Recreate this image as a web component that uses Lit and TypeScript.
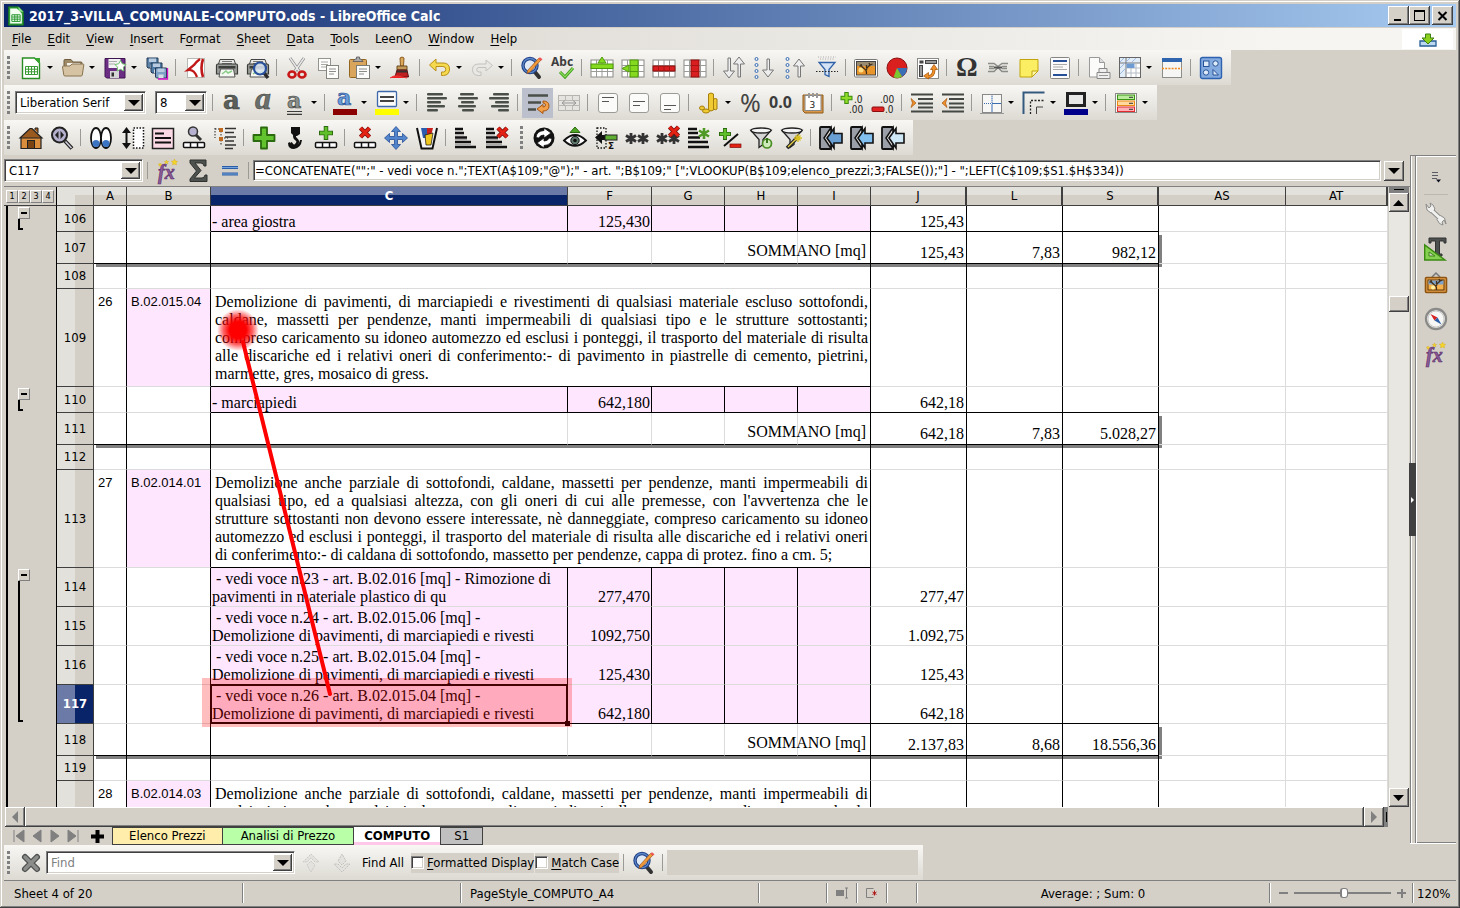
import { LitElement, html, svg, css, nothing, TemplateResult } from "lit";
import { customElement, property } from "lit/decorators.js";
import { classMap } from "lit/directives/class-map.js";

const alignLines = (widths: number[][]) =>
  widths.map(([x, w], i) => svg`<rect x=${x} y=${2 + i * 4} width=${w} height="2.4" rx="1" fill="#4a4f4a"/>`);
const gridBase = svg`<rect x="1" y="4" width="22" height="17" fill="#fff" stroke="#8a8a86"/><path d="M1 9.500h22M1 15.500h22M6.500 4v17M12 4v17M17.500 4v17" stroke="#9b9b97" fill="none"/>`;
const redX = (x: number, y: number) =>
  svg`<path d="M${x} ${y}l9 9M${x + 9} ${y}l-9 9" stroke="#7a0c0c" stroke-width="4.500"/><path d="M${x} ${y}l9 9M${x + 9} ${y}l-9 9" stroke="#e32213" stroke-width="3"/>`;
const boxes = svg`<rect x="1.500" y="16.500" width="21" height="5" rx="1" fill="#fff" stroke="#111" stroke-width="1.500"/><path d="M8.500 16v6M15.500 16v6" stroke="#111" stroke-width="1.500"/>`;
const star = (x: number, y: number) =>
  svg`<path d="M${x} ${y - 5.5}v11M${x - 5} ${y - 3}l10 6M${x + 5} ${y - 3}l-10 6" stroke="#333" stroke-width="2.800"/>`;
const stair = svg`<path d="M1 3h8M1 7h9M1 11.500h12M1 16h16M1 21h21" stroke="#111" stroke-width="2.400"/><path d="M1 5h7M1 9h9M1 13.500h12M1 18.500h16" stroke="#aaa"/>`;
const funnel = svg`<path d="M2 4.500l8 9v8l4-3v-5l8-9z" fill="#d5d5d5" stroke="#222" stroke-width="1.300"/><ellipse cx="12" cy="4.500" rx="10" ry="2.500" fill="#f4f4f4" stroke="#222" stroke-width="1.300"/>`;
const fx = svg`<text x="2" y="20" font-family="Liberation Serif,serif" font-style="italic" font-weight="bold" font-size="20" fill="#8a5c96" stroke="#5a2a68" stroke-width=".600">fx</text><path d="M18.500 0l1 2 2.200.300-1.600 1.500.400 2.200-2-1-2 1 .400-2.200-1.600-1.500 2.200-.300zM10.500 1l.700 1.500h1.500l-1.200 1 .500 1.500-1.500-.900-1.500.900.500-1.500-1.200-1h1.500zM4 4l.500 1 1.200.200-.900.800.200 1.200-1-.600-1 .600.200-1.200-.900-.800L3.500 5z" fill="#f4d42a" stroke="#d0a818" stroke-width=".400"/>`;
const magnifier = svg`<path d="M14 15l5 6" stroke="#333" stroke-width="4" stroke-linecap="round"/><circle cx="10" cy="9.500" r="7" fill="#dfe9f6" stroke="#1f3f85" stroke-width="3.400"/><circle cx="10" cy="9.500" r="7" fill="none" stroke="#5b86c8" stroke-width="1.300"/><path d="M21 4l-11 12-3 1.500.800-3.300L18.500 2.500z" fill="#f09a3a" stroke="#99521a" stroke-width=".700"/><path d="M18.300 2.600l2.700 2.200 1.500-1.600-2.500-2z" fill="#e55"/>`;
const disk = (x: number, y: number, c: string) =>
  svg`<path d="M${x} ${y}h11v10h-10l-1-1z" fill=${c} stroke="#223a58"/><rect x=${x + 2} y=${y + 0.5} width="7" height="3.500" fill="#b8cbe0"/><rect x=${x + 3} y=${y + 6.5} width="5" height="3.500" fill="#d5dde6"/>`;
const tree = svg`<path d="M12.500 18c0-3 0-4-2.500-5.500S7 9 7 8m5.500 6c0-3 2-3 3.500-5m-1-2l1 2 2.500-1M8 10l-2.500 0M12.500 12V9" fill="none" stroke="#40301c" stroke-width="1.300"/>`;
const printer = svg`<path d="M5 3.500h14l2 6H3z" fill="#e8e8e4" stroke="#444"/><path d="M7 5.500h10M7 7.500h10" stroke="#777"/><path d="M1.500 9.500q0-1.500 1.500-1.500h18q1.500 0 1.500 1.500v8.500h-21z" fill="#9b9d98" stroke="#3a3c3a" stroke-width="1.200"/><rect x="3.500" y="10" width="17" height="2.500" fill="#3c3f3c"/><path d="M5.500 13h13l1.500 8h-16z" fill="#f6f8f4" stroke="#555"/><path d="M7 18l4-3 2 2 4-2" stroke="#8c8" stroke-width="1.500" fill="none"/>`;
const outArrow = (c: string) =>
  svg`<rect x="1" y="1" width="11" height="22" rx="1" fill="#9ba0a8" stroke="#111" stroke-width="1.800"/><path d="M5 12L12 1.500V22.500z" fill="#e6e6e6" stroke="#111" stroke-width="1.500"/><path d="M8 12l7-9.500v5h8v9.500h-8v5z" fill=${c} stroke="#111" stroke-width="1.600"/>`;
const sq = (y: number) =>
  svg`<rect x="2.500" y="2.500" width="19" height="19" rx="2.500" fill="#fbfbfa" stroke="#9a9a96"/><path d="M6 ${y}h12M6 ${y + 4}h7" stroke="#555"/>`;

const ICONS: Record<string, TemplateResult<2>> = {
  app: svg`<path d="M3 1h12l6 6v16H3z" fill="#2c9a35" stroke="#1b6e24"/><path d="M15 1v6h6" fill="#8fe08a"/><path d="M5 3h8l6 6v12H5z" fill="#f4fff4"/><path d="M7 10.500h10v8H7zM7 13.200h10M7 15.800h10M10.500 10.500v8M13.500 10.500v8" stroke="#2c9a35" fill="none" stroke-width="1.200"/>`,
  doc: svg`<path d="M3.500 2h12l5 5v15.500h-17z" fill="#fff" stroke="#2a8c24" stroke-width="1.400"/><path d="M15 2h6v6z" fill="#37a52f"/><path d="M6.500 10.500h12v8h-12zM6.500 13.200h12M6.500 15.800h12M9.500 10.500v8M12.500 10.500v8M15.500 10.500v8" stroke="#3a9a34" fill="none"/>`,
  folder: svg`<path d="M3 17V4.500q0-1 1-1h6l2 2.500h8q1 0 1 1V17z" fill="#9f8a68" stroke="#6f5c3e"/><path d="M6 7h13v7H6z" fill="#f3f0ea"/><path d="M1.500 11q0-1 1-1H9l2-2h11q1 0 .800 1l-1.500 10q-.200 1-1.300 1H4q-1 0-1.200-1z" fill="#d5c3a3" stroke="#8a7550"/>`,
  save: svg`<path d="M2 2.500h20v19.500H3.500L2 20.500z" fill="#6b2d83" stroke="#3f1452"/><rect x="5.500" y="3" width="12" height="9" fill="#f2f2f2"/><path d="M6 5.500h8M6 8h6" stroke="#aaa"/><rect x="7" y="15" width="9" height="7" fill="#d6d6d6"/><rect x="8.500" y="16.500" width="2.500" height="4" fill="#333"/><path d="M17.500 4.500l1.800 3.300 3.700.700-2.600 2.700.500 3.800-3.400-1.700-3.400 1.700.500-3.800L12 8.500l3.700-.700z" fill="#fff" stroke="#6cc06c"/>`,
  saveall: svg`${disk(2, 2, "#5d83a8")}${disk(6, 7, "#4f7aa3")}${disk(10.5, 12, "#7ca0c4")}<path d="M13 23h9.500V12" stroke="#d612c8" stroke-width="1.300" fill="none"/>`,
  pdf: svg`<rect x="3.500" y="2.500" width="17" height="19" fill="#fff" stroke="#b9b9b4"/><path d="M16 3q-4 3-6 6L4 14q6-1 9 7" fill="none" stroke="#c01818" stroke-width="2.300"/><path d="M19 3q-3 9 0 18" fill="none" stroke="#c01818" stroke-width="2.600"/>`,
  print: printer,
  preview: svg`${printer}<path d="M18 17l4 5" stroke="#2c2c2c" stroke-width="3.500"/><circle cx="14" cy="12.500" r="6" fill="#dce8f6" fill-opacity=".850" stroke="#274f9c" stroke-width="2.200"/>`,
  cut: svg`<path d="M5 2l9 13M19 2l-9 13" stroke="#888" stroke-width="3"/><path d="M5 2l9 13M19 2l-9 13" stroke="#e9e9e9" stroke-width="1.500"/><ellipse cx="7" cy="18.500" rx="3.500" ry="3" fill="none" stroke="#c81818" stroke-width="2.600"/><ellipse cx="17" cy="18.500" rx="3.500" ry="3" fill="none" stroke="#c81818" stroke-width="2.600"/>`,
  copy: svg`<rect x="2.500" y="2.500" width="12" height="12" fill="#fdfdfc" stroke="#93938f"/><path d="M5 6h7M5 8.500h7M5 11h5" stroke="#a7a7a3"/><rect x="10.500" y="9.500" width="12" height="13" fill="#fdfdfc" stroke="#85857f"/><path d="M13 13h7M13 15.500h7M13 18h5" stroke="#8c8c88"/>`,
  paste: svg`<rect x="2.500" y="3.500" width="17" height="18" rx="1" fill="#d9a55c" stroke="#92661f"/><path d="M6 5.500h10l-2-2.500h-1.500V1h-3v2H8z" fill="#aaa" stroke="#555" stroke-width=".800"/><rect x="9.500" y="9.500" width="13" height="13" fill="#fbfbfa" stroke="#7b7b77"/><path d="M12 13h8M12 15.500h8M12 18h5" stroke="#8a8a86"/>`,
  brush: svg`<path d="M11 2q2-2 4 0l-.500 8h-3z" fill="#dca95c" stroke="#8c5c20"/><path d="M8 10h10v4H8z" fill="#c49a5a" stroke="#6a4a20"/><path d="M8 14h10l1.500 7H6z" fill="#c01f1f" stroke="#5a1010"/><path d="M8 14.500h10v2H8z" fill="#333"/><path d="M1 22q4-3 8-2l9 2" fill="#e22" stroke="#e33"/>`,
  undo: svg`<path d="M8 3v4h7q6.500 0 6.500 6t-6 6.500h-2V16h2q2.300 0 2.300-2.700T15 10.500H8V15L1.500 9z" fill="#f5d94e" stroke="#b8901a"/>`,
  redo: svg`<path d="M16 4v4H9q-6.500 0-6.500 5.500T8 19.500h3V16H9q-2.300 0-2.300-2.300T9 11.500h7V15l6.500-5.500z" fill="#e9e8e5" stroke="#c3c2be"/>`,
  find: magnifier,
  abc: svg`<text x="0" y="10" font-family="Noto Sans,sans-serif" font-weight="bold" font-size="12" fill="#3d3d3d">Abc</text><path d="M9 16l5 5 8-9" fill="none" stroke="#3f9e1f" stroke-width="3"/><path d="M9 16l5 5 8-9" fill="none" stroke="#8edb5a" stroke-width="1.200"/>`,
  insrow: svg`${gridBase}<rect x="1" y="8" width="22" height="4.500" fill="#85d91e" stroke="#4f9a0c"/><path d="M8 7l4-6 4 6z" fill="#85d91e" stroke="#4f9a0c"/>`,
  inscol: svg`${gridBase}<rect x="9" y="4" width="8" height="17" fill="#85d91e" stroke="#4f9a0c"/><path d="M9 9.500h8M9 15.500h8" stroke="#4f9a0c"/><path d="M8 9v7l-7-3.500z" fill="#85d91e" stroke="#4f9a0c"/>`,
  delrow: svg`${gridBase}<rect x="1" y="10" width="22" height="5" fill="#d81e1e" stroke="#8e0e0e"/><path d="M6.500 10v5M12 10v5M17.500 10v5" stroke="#a81414"/>`,
  delcol: svg`${gridBase}<rect x="8" y="4" width="8" height="17" fill="#d81e1e" stroke="#8e0e0e"/><path d="M8 9.500h8M8 15.500h8" stroke="#a81414"/>`,
  sort: svg`<path d="M6 2v13H1.500L7 22l5.500-7H8.500V2zM16 21V8h-4.500L17 1l5.500 7H18.500v13z" fill="#eee" stroke="#777"/>`,
  sortdesc: svg`<g fill="#eaf1fa" stroke="#3a6cb0"><circle cx="3.500" cy="3" r="1.500"/><circle cx="3.500" cy="9" r="1.500"/><circle cx="3.500" cy="15" r="1.500"/><circle cx="3.500" cy="21" r="1.500"/></g><path d="M14 3v11H9.500l5.500 7 5.500-7H16.500V3z" fill="#eee" stroke="#777"/>`,
  sortasc: svg`<g fill="#eaf1fa" stroke="#3a6cb0"><circle cx="3.500" cy="3" r="1.500"/><circle cx="3.500" cy="9" r="1.500"/><circle cx="3.500" cy="15" r="1.500"/><circle cx="3.500" cy="21" r="1.500"/></g><path d="M14 21V10H9.500L15 3l5.500 7H16.500v11z" fill="#eee" stroke="#777"/>`,
  filter: svg`<path d="M3 1h18M5 3h14" stroke="#aaa" stroke-dasharray="1 1.500"/><path d="M4 6.500h16l-6 7v7l-4-2v-5z" fill="#d4e3f5" stroke="#2f62a8" stroke-width="1.300"/><path d="M1 15.500h22" stroke="#222" stroke-dasharray="1.500 1.500"/>`,
  image: svg`<rect x=".500" y="3.500" width="23" height="17.500" rx="1" fill="#fff" stroke="#777"/><rect x="2.500" y="5.500" width="19" height="13.500" fill="#e8962c" stroke="#444"/><path d="M3 6h18v4H3z" fill="#9a8a70"/><circle cx="7" cy="14" r="2.500" fill="#ffe08a"/>${tree}`,
  chart: svg`<circle cx="12" cy="12" r="10" fill="#da1f1f" stroke="#8c0f0f"/><path d="M12 12h10a10 10 0 0 1-5 8.700z" fill="#3a6fb5"/><path d="M12 12l5 8.700a10 10 0 0 1-8.500.500z" fill="#7cc832"/>`,
  pivot: svg`<rect x="1.500" y="2.500" width="21" height="20" fill="#fff" stroke="#8a8a86"/><rect x="3.500" y="4.500" width="4" height="3" fill="#444"/><rect x="9.500" y="4.500" width="11" height="3" fill="#999" stroke="#444"/><rect x="3.500" y="9.500" width="3" height="11" fill="#999" stroke="#444"/><path d="M11 20.500q7 1 7-8" fill="none" stroke="#a85a10" stroke-width="3.200"/><path d="M14.500 13.500l3.500-5 3.500 5zM12.500 16.500l-5 3.500 5 3z" fill="#f0902a" stroke="#a85a10" stroke-width=".800"/><path d="M11 20.500q7 1 7-8" fill="none" stroke="#f0902a" stroke-width="1.800"/>`,
  omega: svg`<text x="1" y="20" font-family="Liberation Serif,serif" font-weight="bold" font-size="27" fill="#333">Ω</text>`,
  link: svg`<g fill="none" stroke="#8a8c88" stroke-width="1.500"><path d="M2 7.500h6l4 3M2 15.500h6l4-4M22 7.500h-6l-4 3M22 15.500h-6l-4-4M3 10.500h5M16 10.500h5M3 12.500h5M16 12.500h5"/></g><path d="M8 11.500h8" stroke="#555" stroke-width="2"/>`,
  note: svg`<path d="M3 3.500h18V15l-6 6H3z" fill="#fbee62" stroke="#c2a50c"/><path d="M15 21v-6h6z" fill="#fff7a8" stroke="#c2a50c"/>`,
  header: svg`<rect x="2.500" y="1.500" width="19" height="21" rx="1" fill="#fafafa" stroke="#858581"/><path d="M5 5h14M5 19h14" stroke="#254f96" stroke-width="2"/><path d="M5 8.500h14M5 11h10M5 13.500h14" stroke="#a9a9a5"/>`,
  printarea: svg`<path d="M2.500 1.500h10l5 5V21h-15z" fill="#fbfbfa" stroke="#999"/><path d="M12.500 1.500v5h5" fill="#ddd" stroke="#999"/><path d="M12 12.500h8v4h-8zM10 16.500h13v6H10z" fill="#eee" stroke="#888"/><path d="M12 19.500h9" stroke="#999"/>`,
  freeze: svg`<rect x="1.500" y="1.500" width="21" height="20" fill="#fff" stroke="#666"/><path d="M2 2h20v5H8v14H2z" fill="#e3edf8"/><path d="M2 7h20M8 2v19" stroke="#777"/><path d="M8 12h14M8 17h14M13 7v14M18 7v14" stroke="#b5bcc6"/><path d="M2 6l4-4M8 6l4-4M14 6l4-4M2 12l5-5M2 18l5-5" stroke="#9dbbe0"/><rect x="8.500" y="7.500" width="8" height="4.500" fill="#6d9bd2"/>`,
  split: svg`<rect x="2.500" y="2.500" width="19" height="19" fill="#f6f6f4" stroke="#8d8d89"/><rect x="2" y="2" width="20" height="4" fill="#2f64ae"/><path d="M2 12.500h20" stroke="#f08a1c" stroke-width="1.500" stroke-dasharray="2 1.200"/>`,
  shapes: svg`<rect x="1.500" y="1.500" width="21" height="21" rx="2" fill="#84abdf" stroke="#2f62ae" stroke-width="1.400"/><g fill="#dfeaf8" stroke="#255196"><rect x="4.500" y="5" width="5.500" height="5.500"/><circle cx="16.500" cy="7.500" r="2.700"/><circle cx="7" cy="16.500" r="2.700"/><path d="M14 13.500v5.500h5.500z"/></g>`,
  bold: svg`<text x="2" y="18" font-family="DejaVu Serif,serif" font-weight="bold" font-size="26" fill="#5b5f5b" stroke="#3a3d3a" stroke-width=".600">a</text>`,
  italic: svg`<text x="3" y="18" font-family="Liberation Serif,serif" font-style="italic" font-weight="bold" font-size="32" fill="#6b6f6b" stroke="#3a3d3a" stroke-width=".500">a</text>`,
  under: svg`<text x="4" y="17" font-family="DejaVu Serif,serif" font-weight="bold" font-size="22" fill="#8b8f8b" stroke="#3a3d3a" stroke-width=".600">a</text><path d="M4 20.500h15M4 23.300h15" stroke="#3a3d3a" stroke-width="1.200"/>`,
  fontcolor: svg`<text x="4" y="14" font-family="DejaVu Serif,serif" font-weight="bold" font-size="22" fill="#6a9ad8" stroke="#264f96" stroke-width=".700">a</text><rect x="0" y="18" width="24" height="6" fill="#8b0000"/>`,
  highlight: svg`<rect x="2.500" y=".500" width="19" height="15" rx="1" fill="#fbfbfa" stroke="#3d69aa" stroke-width="1.300"/><path d="M5 6h14M5 10h14" stroke="#444" stroke-width="2"/><rect x="0" y="18" width="24" height="6" fill="#ff0"/>`,
  left: svg`${alignLines([[2, 16], [2, 20], [2, 14], [2, 18], [2, 11]])}`,
  center: svg`${alignLines([[4, 14], [2, 20], [5, 13], [2, 18], [6, 12]])}`,
  right: svg`${alignLines([[6, 16], [2, 20], [8, 14], [4, 18], [11, 11]])}`,
  wrap: svg`<path d="M2 4.500h20M2 11.500h13M2 18.500h8" stroke="#4a4f4a" stroke-width="2.400"/><path d="M17 10q6 0 6 5t-6 5v2.500l-6-4.500 6-4.500v2.500q2.500 0 2.500-2T17 12z" fill="#f3a04a" stroke="#a8560e"/>`,
  merge: svg`<rect x="1.500" y="4.500" width="21" height="15" fill="#e6e4e0" stroke="#b5b3ae"/><path d="M1 9.500h22M1 14.500h22M8.500 4v5M15.500 4v5M8.500 15v5M15.500 15v5" stroke="#bbb9b4"/><path d="M5 12h14M8 9.500L5 12l3 2.500M16 9.500l3 2.500-3 2.500" stroke="#999" fill="none"/>`,
  vtop: sq(6.5), vmid: sq(10.5), vbot: sq(14.5),
  money: svg`<g fill="#f0ca32" stroke="#a67f0c"><path d="M11.500 3q2.500-2 5 0v16q-2.500 2-5 0z"/><path d="M16.500 8q2-1 3.500 0v10q-1.500 1.500-3.500 0z"/><ellipse cx="5" cy="17" rx="2.500" ry="2"/><ellipse cx="9" cy="20" rx="3.500" ry="2"/></g>`,
  percent: svg`<text x="1" y="21" font-family="Noto Sans,sans-serif" font-size="25" fill="#444">%</text>`,
  number: svg`<text x="-1" y="17" font-family="Noto Sans,sans-serif" font-weight="bold" font-size="16" fill="#3b3b3b">0.0</text>`,
  date: svg`<path d="M2 4h20v18H4l-2-2z" fill="#d9974a" stroke="#8e5a18"/><rect x="4" y="4.500" width="16" height="15" fill="#fff" stroke="#888"/><path d="M8 2v5M16 2v5M12 2v4" stroke="#999" stroke-width="2"/><text x="8.500" y="17" font-family="DejaVu Sans,sans-serif" font-size="9" fill="#222">3</text>`,
  adddec: svg`<path d="M6.500 1v12M.500 7h12" stroke="#3d8a0f" stroke-width="4.500"/><path d="M6.500 2v10M1.500 7h10" stroke="#8edb2a" stroke-width="2.500"/><g font-family="DejaVu Sans Condensed,sans-serif" font-size="10" fill="#222"><text x="14" y="12">.0</text><text x="9" y="22">.00</text></g>`,
  deldec: svg`<rect x="1" y="16" width="12" height="4.500" rx="1" fill="#e02222" stroke="#8a0e0e"/><g font-family="DejaVu Sans Condensed,sans-serif" font-size="10" fill="#222"><text x="9" y="12">.00</text><text x="14" y="22">.0</text></g>`,
  indent: svg`<path d="M1 3.500h22M8 8h15M8 12.500h15M8 16.500h15M1 20.500h22" stroke="#444844" stroke-width="2.200"/><path d="M1 7.500l5 4.500-5 4.500 1.500-4.500z" fill="#f0902a" stroke="#a8560e" stroke-width=".700"/>`,
  outdent: svg`<path d="M1 3.500h22M8 8h15M8 12.500h15M8 16.500h15M1 20.500h22" stroke="#444844" stroke-width="2.200"/><path d="M6 7.500L1 12l5 4.500-1.500-4.500z" fill="#f0902a" stroke="#a8560e" stroke-width=".700"/>`,
  border: svg`<rect x="2.500" y="3.500" width="19" height="18" fill="#f7f7f6" stroke="#888"/><path d="M12 4v17M3 12.500h18" stroke="#3a6cb0"/><path d="M12 4v8M3 12.500h9" stroke="#f7f7f6" stroke-dasharray="1 1"/><path d="M0 22.500h24" stroke="#999"/>`,
  bstyle: svg`<path d="M1.500 23V1.500h21" fill="none" stroke="#34597e" stroke-width="2"/><path d="M8.500 23V9.500H23" fill="none" stroke="#222" stroke-width="1.300" stroke-dasharray="2 1.500"/><path d="M14.500 23v-7H21" fill="none" stroke="#444"/>`,
  bcolor: svg`<rect x="3.500" y="2.500" width="17" height="12" fill="#e8e8e6" stroke="#222" stroke-width="3"/><rect x="0" y="18" width="24" height="6" fill="#00008b"/>`,
  cond: svg`<rect x="1.500" y="2.500" width="21" height="19" fill="#f7f7f6" stroke="#8a8a86"/><rect x="3.500" y="4" width="17" height="4.500" fill="#b9eb9a" stroke="#3c9616"/><rect x="3.500" y="10" width="17" height="4.500" fill="#ffd9a0" stroke="#e88a14"/><rect x="3.500" y="16" width="17" height="4.500" fill="#ffb0b4" stroke="#e02a30"/><path d="M15 6.300h4M15 12.300h4M15 18.300h4" stroke="#333"/>`,
  home: svg`<path d="M2 11.500v11h20v-11" fill="#d98e3e" stroke="#222" stroke-width="1.200"/><path d="M16 4V2h3v5" fill="#a65c18" stroke="#222"/><path d="M1 12L11 2.500h2L23 12z" fill="#9a5a1e" stroke="#222" stroke-width="1.200"/><rect x="8.500" y="14.500" width="7" height="8" fill="#7a4312" stroke="#222"/>`,
  zoom: svg`<path d="M15 15l7 7.500" stroke="#222" stroke-width="4"/><path d="M15.500 15.500l6 6.500" stroke="#d2cfe0" stroke-width="1.500"/><circle cx="9.500" cy="9" r="7.500" fill="#b6b1cf" stroke="#222" stroke-width="2"/><path d="M8.500 5v8L5 9zM10.500 5v8L14 9z" fill="#222"/>`,
  eyes: svg`<ellipse cx="7" cy="12" rx="5" ry="10" fill="#fff" stroke="#111" stroke-width="1.800"/><ellipse cx="17" cy="12" rx="5" ry="10" fill="#fff" stroke="#111" stroke-width="1.800"/><circle cx="7" cy="17.500" r="3.600" fill="#3c74c4"/><circle cx="17" cy="17.500" r="3.600" fill="#3c74c4"/>`,
  height: svg`<path d="M6.500 4v16" stroke="#111" stroke-width="2"/><path d="M2 7l4.500-6L11 7zM2 17l4.500 6 4.500-6z" fill="#111"/><rect x="13.500" y="2" width="10" height="20" fill="#fff" stroke="#111" stroke-width="1.500" stroke-dasharray="1.500 1.500"/>`,
  textbox: svg`<rect x="1.500" y="2.500" width="21" height="20" fill="#fbd9e4" stroke="#222" stroke-width="1.500"/><path d="M4 7.500h9M4 12h16M4 16.500h16" stroke="#111" stroke-width="2"/>`,
  zoomrow: svg`<path d="M14 9l5 5" stroke="#333" stroke-width="3"/><circle cx="11" cy="5.500" r="4.500" fill="#b6b1cf" stroke="#333" stroke-width="1.500"/>${boxes}`,
  tree: svg`<path d="M2 2v10M2 3h7M8 5v15M8 12h7" stroke="#222" stroke-dasharray="1.500 1.500"/><rect x="6" y="2" width="4" height="4" fill="#c06a20"/><rect x="6" y="11" width="4" height="4" fill="#c06a20"/><path d="M12 2.500h11M12 6.500h9M12 11h11M12 15h9M12 19h11M12 22.500h8" stroke="#333" stroke-width="1.700"/>`,
  plus: svg`<path d="M9 1.500h6V9h7.500v6H15v7.500H9V15H1.500V9H9z" fill="#63c32e" stroke="#2c6a10" stroke-width="1.800" stroke-linejoin="round"/>`,
  hook: svg`<path d="M8 1h9v7l-3 2h-3L8 7z" fill="#111"/><path d="M11.500 9q-.500 3 2 4.500 2.500 2 0 5t-5-.500l-1-1" fill="none" stroke="#111" stroke-width="2.800"/><path d="M5 17q0 6 6 6 7-1 8-9h-2q-1 5-5 6-4 .500-5-4z" fill="#111"/>`,
  plusrow: svg`<path d="M12 0v14M5 7h14" stroke="#2c6a10" stroke-width="4.500"/><path d="M12 1v12M6 7h12" stroke="#5fc02a" stroke-width="2.800"/>${boxes}`,
  delrow2: svg`${redX(7.5, 2)}${boxes}`,
  move: svg`<path d="M12 .500l4.500 5h-3v5h5v-3l5 4.500-5 4.500v-3h-5v5h3l-4.500 5-4.500-5h3v-5h-5v3l-5-4.500 5-4.500v3h5v-5h-3z" fill="#5285cc" stroke="#264f96" stroke-width=".800"/>`,
  bin: svg`<path d="M2 2l4.500 20.500h11L22 2" fill="#f5f5f5" stroke="#111" stroke-width="2"/><path d="M6 2h7v10H8z" fill="#2c5cae"/><path d="M12 2h6l-2 8h-4z" fill="#c8201c"/><path d="M10 9l8-2-2 12h-5z" fill="#f0c820" stroke="#111" stroke-width=".700"/>`,
  stair, stairdel: svg`${stair}${redX(13, 2)}`,
  cycle: svg`<circle cx="12" cy="12" r="10.500" fill="#111"/><path d="M4 11.500q.500-6.500 8-7V2l7 5-7 5V9q-4 0-5 3zM20 12.500q-.500 6.500-8 7V22l-7-5 7-5v3q4 0 5-3z" fill="#fff" stroke="#111" stroke-width=".800"/>`,
  eye: svg`<path d="M7 6.500L12 1l5 5.500z" fill="#4fa524" stroke="#2c6a10"/><path d="M1 14.500q11-11 22 0-11 10.500-22 0z" fill="#fff" stroke="#111" stroke-width="1.800"/><circle cx="12" cy="14.500" r="4.200" fill="#5d7a6d" stroke="#111"/><circle cx="12" cy="14.500" r="1.800" fill="#111"/>`,
  sumleft: svg`<path d="M3 2h9v20H3z" fill="none" stroke="#111" stroke-width="1.300" stroke-dasharray="1.500 1.500"/><path d="M1 11.500L8 5v4h3v5H8v4z" fill="#111"/><rect x="11" y="9" width="12" height="5" fill="#5fae34" stroke="#222"/><text x="14" y="23" font-family="DejaVu Sans,sans-serif" font-weight="bold" font-size="9" fill="#111">Σ</text>`,
  stars: svg`${star(6, 12.500)}${star(18, 12.500)}`,
  starsdel: svg`${star(6, 12.500)}${star(18, 12.500)}${redX(13.5, 1)}`,
  stairstar: svg`<path d="M1 3h9M1 7h10M1 11.500h12M1 16h20M1 21h21" stroke="#111" stroke-width="2.400"/><path d="M17 2v11M12 4.500l10 6M22 4.500l-10 6" stroke="#4f9a24" stroke-width="2.600"/>`,
  plusminus: svg`<path d="M7 2v12M1 8h12" stroke="#2c6a10" stroke-width="4"/><path d="M7 3v10M2 8h10" stroke="#5fc02a" stroke-width="2.500"/><path d="M6 20L20 8" stroke="#111" stroke-width="2"/><rect x="12" y="18" width="11" height="3.500" fill="#e32213" stroke="#7a0c0c" stroke-width=".700"/>`,
  filteron: svg`${funnel}<circle cx="18" cy="17.500" r="4.500" fill="#cdebb8" stroke="#4a8c24" stroke-width="1.700"/><path d="M18 12v5" stroke="#2c6a10" stroke-width="1.800"/>`,
  filtermagic: svg`${funnel}<path d="M7 22L17 12" stroke="#222" stroke-width="3.500"/><path d="M8 21l8-8" stroke="#e6d34a" stroke-width="1.200"/><path d="M18 8v8M14 12h8M15.500 9.500l5 5M20.500 9.500l-5 5" stroke="#d8c020" stroke-width="1.300"/>`,
  out1: outArrow("#6a9fd4"), out2: outArrow("#82c0f0"), out3: outArrow("#cfe8f6"),
  fx,
  sigma: svg`<path d="M3 1h16v6h-2q-.500-3-3-3H8l6 7.500L7.500 19H15q2.500 0 3-3h2V22.500H3V20l6.500-8L3 4z" fill="#4d524f" stroke="#2e312f"/>`,
  equals: svg`<path d="M4 8.500h16M4 15h16" stroke="#2c5ea8" stroke-width="3.200"/><path d="M4 8.500h16M4 15h16" stroke="#79a3dc" stroke-width="1.200"/>`,
  download: svg`<path d="M4 12h16v5H4z" fill="#bcd8f0" stroke="#275e94" stroke-width="1.300"/><path d="M9.500 5h5v4H18l-6 6-6-6h3.500z" fill="#8ad01c" stroke="#3d8010"/>`,
  menu: svg`<path d="M8 8.500h6M8 11.500h6M8 14.500h5" stroke="#5c5c66"/><path d="M12 15.500h5l-2.500 3z" fill="#112"/>`,
  wrench: svg`<path d="M5 6l14 13" stroke="#8c8c8a" stroke-width="5"/><path d="M2 2l1 6 4 3 4-4-2-4-3-2 1 3-2 2zM22 22l-1.500-6-4-2.500-3.500 4 2.500 4 3.500 1.500-1-3 2-2z" fill="#f1f1ef" stroke="#8c8c8a" stroke-linejoin="round"/><path d="M6 7l12 11" stroke="#f1f1ef" stroke-width="3"/>`,
  styles: svg`<path d="M5 1h17v5h-2V4h-4.500v13H18v2h-9v-2h2.500V4H7v2H5z" fill="#4c504e" stroke="#333"/><path d="M.700 8v15H21z" fill="#86d052" stroke="#3a8a12" stroke-width="1.400"/><path d="M5 15v4h6z" fill="#d4cfc8" stroke="#3a8a12"/>`,
  gallery: svg`<path d="M8 5l4-4 4 4" fill="none" stroke="#777" stroke-width="1.500"/><rect x="1.500" y="5.500" width="21" height="15" rx="1" fill="#e3a04a" stroke="#8e5410" stroke-width="1.600"/><rect x="4" y="8" width="16" height="10" fill="#f7b24c" stroke="#5c3408"/><path d="M4.500 8.500h15v4h-15z" fill="#7da2cc"/><circle cx="9" cy="15.500" r="2" fill="#fff0a0"/>${tree}`,
  compass: svg`<circle cx="12" cy="12" r="10" fill="#f6f6f5" stroke="#8a8a88" stroke-width="2.300"/><circle cx="12" cy="12" r="8" fill="none" stroke="#c9c9c7"/><path d="M6.500 7l7 3.500-3 3z" fill="#d92020"/><path d="M17.500 17.500l-7-4 3-3z" fill="#2c5ea8"/>`,
  close: svg`<path d="M6 6l12 12M18 6L6 18" stroke="#4d504e" stroke-width="6" stroke-linecap="round"/><path d="M6 6l12 12M18 6L6 18" stroke="#8a8d8a" stroke-width="3.500" stroke-linecap="round"/>`,
  prev: svg`<path d="M12 3l8 8h-4l-4-4-4 4H4zM12 10l4 4-4 7-4-7z" fill="#e4e2de" stroke="#cbc9c4" stroke-dasharray="2 1"/>`,
  next: svg`<path d="M12 21l-8-8h4l4 4 4-4h4zM12 14l-4-4 4-7 4 7z" fill="#e4e2de" stroke="#c2c0bb" stroke-dasharray="2 1"/>`,
};

const icon = (name: string) => html`<svg class="icon" viewBox="0 0 24 24" aria-hidden="true">${ICONS[name]}</svg>`;

type Row =
  | { n: number; kind: "measure"; text: string[]; f: string; j: string; last?: boolean; group?: number }
  | { n: number; kind: "total"; j: string; l: string; s: string }
  | { n: number; kind: "gap" }
  | { n: number; kind: "item"; no: string; code: string; lines: string[]; cut?: boolean };

const ROWS: Row[] = [
  { n: 106, kind: "measure", text: ["- area giostra"], f: "125,430", j: "125,43", last: true, group: 1 },
  { n: 107, kind: "total", j: "125,43", l: "7,83", s: "982,12" },
  { n: 108, kind: "gap" },
  {
    n: 109, kind: "item", no: "26", code: "B.02.015.04",
    lines: [
      "Demolizione di pavimenti, di marciapiedi e rivestimenti di qualsiasi materiale escluso sottofondi,",
      "caldane, massetti per pendenze, manti impermeabili di qualsiasi tipo e le strutture sottostanti;",
      "compreso caricamento su idoneo automezzo ed esclusi i ponteggi, il trasporto del materiale di risulta",
      "alle discariche ed i relativi oneri di conferimento:- di pavimento in piastrelle di cemento, pietrini,",
      "marmette, gres, mosaico di gress.",
    ],
  },
  { n: 110, kind: "measure", text: ["- marciapiedi"], f: "642,180", j: "642,18", last: true, group: 1 },
  { n: 111, kind: "total", j: "642,18", l: "7,83", s: "5.028,27" },
  { n: 112, kind: "gap" },
  {
    n: 113, kind: "item", no: "27", code: "B.02.014.01",
    lines: [
      "Demolizione anche parziale di sottofondi, caldane, massetti per pendenze, manti impermeabili di",
      "qualsiasi tipo, ed a qualsiasi altezza, con gli oneri di cui alle premesse, con l'avvertenza che le",
      "strutture sottostanti non devono essere interessate, nè danneggiate, compreso caricamento su idoneo",
      "automezzo ed esclusi i ponteggi, il trasporto del materiale di risulta alle discariche ed i relativi oneri",
      "di conferimento:- di caldana di sottofondo, massetto per pendenze, cappa di protez. fino a cm. 5;",
    ],
  },
  { n: 114, kind: "measure", text: ["\u00a0- vedi voce n.23 - art. B.02.016 [mq] - Rimozione di", "pavimenti in materiale plastico di qu"], f: "277,470", j: "277,47", group: 4 },
  { n: 115, kind: "measure", text: ["\u00a0- vedi voce n.24 - art. B.02.015.06 [mq] -", "Demolizione di pavimenti, di marciapiedi e rivesti"], f: "1092,750", j: "1.092,75", group: 0 },
  { n: 116, kind: "measure", text: ["\u00a0- vedi voce n.25 - art. B.02.015.04 [mq] -", "Demolizione di pavimenti, di marciapiedi e rivesti"], f: "125,430", j: "125,43", group: 0 },
  { n: 117, kind: "measure", text: ["\u00a0- vedi voce n.26 - art. B.02.015.04 [mq] -", "Demolizione di pavimenti, di marciapiedi e rivesti"], f: "642,180", j: "642,18", last: true, group: 0 },
  { n: 118, kind: "total", j: "2.137,83", l: "8,68", s: "18.556,36" },
  { n: 119, kind: "gap" },
  {
    n: 120, kind: "item", no: "28", code: "B.02.014.03", cut: true,
    lines: [
      "Demolizione anche parziale di sottofondi, caldane, massetti per pendenze, manti impermeabili di",
      "qualsiasi tipo, ed a qualsiasi altezza, con gli oneri di cui alle premesse, con l'avvertenza che le",
    ],
  },
];

const ACTIVE_ROW = 117;

@customElement("calc-sheet")
export class CalcSheet extends LitElement {
  static styles = css`
    :host { display: block; position: relative; overflow: hidden; background: #fff; }
    table { width: 100%; table-layout: fixed; border-collapse: separate; border-spacing: 0; font: 16px/18px "Liberation Serif", serif; }
    .w-gutter { width: 53px; } .w-head { width: 37px; } .w-a { width: 33px; } .w-b, .w-f { width: 84px; }
    .w-c { width: 357px; } .w-g { width: 73px; } .w-j { width: 96px; } .w-as { width: 127px; }
    th, td { box-sizing: border-box; padding: 0; }
    td { border: 0 solid #dcdcdc; border-width: 0 1px 1px 0; vertical-align: bottom; white-space: nowrap; }
    thead th {
      height: 19px; font: 13px/16px "DejaVu Sans Condensed", "Noto Sans", sans-serif;
      background: linear-gradient(#e2e1dc 8px, #d4cfc6 8px); border: 0 solid #404040; border-width: 0 1px 1px 0;
    }
    thead th.wide { border-right-width: 2px; }
    thead th.sel { background: linear-gradient(#6b7aa6 8px, #0a246a 8px); color: #fff; font-weight: bold; }
    thead th.corner { background: linear-gradient(#e2e1dc 8px, transparent 8px), linear-gradient(90deg, #e2e1dc 18px, #d4cfc6 18px); }
    thead th.levels { background: #d4d0c8; border-right-color: #000; }
    .levelbar { display: flex; padding-left: 2px; }
    .level {
      width: 12px; height: 13px; padding: 0; border: 1px solid; border-color: #fff #808080 #808080 #fff;
      background: #d4d0c8; font: 9px/10px "DejaVu Sans Condensed", sans-serif;
    }
    tbody th {
      font: 13px/16px "DejaVu Sans Condensed", "Noto Sans", sans-serif; border: 0 solid #404040; border-width: 0 1px 1px 0;
      background: linear-gradient(90deg, #e2e1dc 18px, #d4cfc6 18px);
    }
    tbody th.sel { background: linear-gradient(90deg, #6b7aa6 18px, #0a246a 18px); color: #fff; font-weight: bold; }
    td.gutter {
      border-width: 0 1px 0 0; border-color: #000; vertical-align: top;
      background: linear-gradient(#000, #000) 2px 0 / 2px 100% no-repeat, #d4d0c8;
    }
    td.group {
      background:
        linear-gradient(#000, #000) 2px 0 / 2px 100% no-repeat,
        linear-gradient(#000, #000) 14px 12px / 2px calc(100% - 14px) no-repeat,
        linear-gradient(#000, #000) 14px calc(100% - 2px) / 5px 2px no-repeat, #d4d0c8;
    }
    .fold {
      display: block; width: 12px; height: 12px; margin: 1px 0 0 14px; padding: 0; border: 1px solid; border-color: #fff #808080 #808080 #fff;
      background: linear-gradient(#000, #000) center / 6px 2px no-repeat, #d4d0c8;
    }
    .measure1 { height: 26px; } .measure2 { height: 39px; } .total { height: 32px; } .gap { height: 25px; } .item { height: 98px; }
    .kr { border-right-color: #000; }
    .kb { border-bottom-color: #000; }
    .pink { background: #ffe6ff; }
    .line { display: block; }
    .txt { padding-left: 1px; }
    .num { text-align: right; padding-right: 1px; }
    .tail { padding-right: 2px; }
    .total .num { padding-bottom: 1px; }
    .sum { padding: 0 4px 3px 0; }
    .sum .line { display: flex; justify-content: flex-end; }
    .narrow { font-family: "Liberation Sans Narrow", "Liberation Sans", sans-serif; font-size: 13px; vertical-align: top; padding: 4px 0 0 4px; }
    .desc { vertical-align: top; padding: 4px 2px 0 4px; white-space: normal; }
    .desc .just { text-align-last: justify; }
    .gap .shade { background: linear-gradient(#808080, #808080) 0 0 / 100% 3px no-repeat; }
    .gap .shade-a { background: linear-gradient(#808080, #808080) 2px 0 / 100% 3px no-repeat; }
    .gap .shade-end { background: linear-gradient(#808080, #808080) 0 0 / 3px 3px no-repeat; }
    .total .shade-right { background: linear-gradient(#808080, #808080) 0 3px / 3px 100% no-repeat; }
    .active { position: relative; }
    .cursor { position: absolute; inset: -1px; border: 2px solid #000; }
    .cursor::after { content: ""; position: absolute; right: -4px; bottom: -4px; width: 5px; height: 5px; background: #000; }
    .mark { position: absolute; inset: -7px -5px -4px -9px; background: rgba(255, 0, 0, 0.26); z-index: 1; }
    .pointer { position: absolute; left: 206px; top: 113px; width: 130px; height: 400px; z-index: 2; pointer-events: none; }
  `;

  private gutter(row: Row) {
    if (row.kind !== "measure") return html`<td class="gutter"></td>`;
    if (!row.group) return nothing;
    return html`<td class="gutter group" rowspan=${row.group}><button class="fold" aria-label="Hide details"></button></td>`;
  }

  private tail(cls: string, j = "", l = "", s = "", as = "") {
    return html`<td class="num tail kr ${cls}">${j}</td><td class="num tail kr ${cls}">${l}</td><td class="num tail kr ${cls}">${s}</td>
      <td class=${as}></td><td></td>`;
  }

  private cells(row: Row) {
    switch (row.kind) {
      case "measure": {
        const kb = row.last ? "kb" : "";
        const active = row.n === ACTIVE_ROW;
        return html`<td class="kr"></td><td class="kr"></td>
          <td class="pink kr txt ${kb} ${active ? "active" : ""}">${row.text.map((t) => html`<span class="line">${t}</span>`)}${active
            ? html`<span class="cursor"></span><span class="mark"></span>` : nothing}</td>
          <td class="pink kr num ${kb}">${row.f}</td>
          <td class="pink kr ${kb}"></td><td class="pink kr ${kb}"></td><td class="pink kr ${kb}"></td>
          ${this.tail(kb, row.j)}`;
      }
      case "total":
        return html`<td class="kr kb"></td><td class="kr kb"></td><td class="kb"></td><td class="kb"></td><td class="kb"></td><td class="kb"></td>
          <td class="kr kb sum"><span class="line">SOMMANO [mq]</span></td>${this.tail("kb", row.j, row.l, row.s, "shade-right")}`;
      case "gap":
        return html`<td class="kr shade-a"></td><td class="kr shade"></td><td class="kr shade" colspan="5"></td>${this.tail("shade", "", "", "", "shade-end")}`;
      case "item":
        return html`<td class="kr narrow">${row.no}</td><td class="kr narrow pink">${row.code}</td>
          <td class="kr kb desc" colspan="5">${row.lines.map(
            (t, i) => html`<span class=${classMap({ line: true, just: !!row.cut || i < row.lines.length - 1 })}>${t}</span>`,
          )}</td>${this.tail("")}`;
    }
  }

  render() {
    return html`
      <table>
        <colgroup>
          <col class="w-gutter" /><col class="w-head" /><col class="w-a" /><col class="w-b" /><col class="w-c" /><col class="w-f" />
          <col class="w-g" /><col class="w-g" /><col class="w-g" /><col class="w-j" /><col class="w-j" /><col class="w-j" /><col class="w-as" /><col />
        </colgroup>
        <thead>
          <tr>
            <th class="levels"><div class="levelbar">${[1, 2, 3, 4].map((n) => html`<button class="level">${n}</button>`)}</div></th>
            <th class="corner"></th>
            ${["A", "B", "C", "F", "G", "H", "I", "J", "L", "S", "AS", "AT"].map(
              (c) => html`<th class=${classMap({ sel: c === "C", wide: ["J", "L", "S", "AT"].includes(c) })}>${c}</th>`,
            )}
          </tr>
        </thead>
        <tbody>
          ${ROWS.map((row) => {
            const cls = row.kind === "measure" ? `measure${row.text.length}` : row.kind;
            return html`<tr class=${cls}>${this.gutter(row)}<th class=${row.n === ACTIVE_ROW ? "sel" : ""}>${row.n}</th>${this.cells(row)}</tr>`;
          })}
        </tbody>
      </table>
      <svg class="pointer" viewBox="0 0 130 400" aria-hidden="true">
        <defs><radialGradient id="dot"><stop offset="0.4" stop-color="#f00" /><stop offset="0.7" stop-color="#f00" stop-opacity="0.6" /><stop offset="1" stop-color="#f00" stop-opacity="0" /></radialGradient></defs>
        <circle cx="28" cy="30" r="21" fill="url(#dot)" />
        <path d="M33 42L120 394" stroke="#f00" stroke-width="4" stroke-linecap="round" />
      </svg>
    `;
  }
}

/* Toolbar entries: "|" separator, "v" drop-down arrow, ":" a new grip, "!" a pressed button. */
const STANDARD = "doc v folder v save v saveall | pdf print preview | cut copy paste v brush | undo v redo v | find abc | insrow inscol delrow delcol | sort sortdesc sortasc filter | image chart pivot | omega link note header | printarea freeze v split | shapes";
const FORMATTING = "| bold italic under v | fontcolor v highlight v | left center right | wrap! merge | vtop vmid vbot | money v percent number date | adddec deldec | indent outdent | border v bstyle v bcolor v | cond v";
const LEENO = "home zoom | eyes height textbox zoomrow tree | plus hook plusrow | delrow2 move bin | stair stairdel : cycle eye sumleft stars starsdel stairstar plusminus filteron filtermagic | out1 out2 out3";

@customElement("app-root")
export class AppRoot extends LitElement {
  @property() fileName = "2017_3-VILLA_COMUNALE-COMPUTO.ods";

  static styles = css`
    :host {
      display: flex; flex-direction: column; box-sizing: border-box; width: 100%; height: 100vh; padding: 4px; overflow: hidden;
      background: #d4d0c8; color: #000; font: 13px/16px "DejaVu Sans Condensed", "Noto Sans", sans-serif;
      box-shadow: inset -1px -1px #404040, inset 1px 1px #d4d0c8, inset -2px -2px #808080, inset 2px 2px #fff;
    }
    button, input, select { font: inherit; color: inherit; margin: 0; }
    button { padding: 0; border: 0; background: none; }
    .icon { display: block; width: 24px; height: 24px; flex: none; overflow: visible; }
    .raised { background: #d4d0c8; box-shadow: inset -1px -1px #404040, inset 1px 1px #fff, inset -2px -2px #808080; }

    .title { display: flex; align-items: center; height: 23px; padding: 0 3px 0 2px; background: linear-gradient(90deg, #0a246a, #a6caf0); color: #fff; }
    .title .icon { width: 20px; height: 20px; }
    .title h1 { flex: 1; margin: 0 0 0 3px; font: bold 14px/20px "DejaVu Sans Condensed", "Noto Sans", sans-serif; }
    .winbtn { display: grid; place-items: center; width: 21px; height: 19px; }
    .winbtn svg { display: block; width: 13px; height: 12px; }
    .winbtn:last-child { margin-left: 2px; }

    .menu { display: flex; align-items: center; height: 22px; margin-top: 1px; padding: 0 3px 0 0; background: linear-gradient(90deg, #d4d0c8, #f6f5f2 88%); }
    .menu nav { flex: 1; display: flex; }
    .menu nav button { padding: 0 8px; }
    .menu u, .find u { text-underline-offset: 2px; }
    .menu .update { display: grid; place-items: center; width: 51px; height: 20px; background: #fff; overflow: hidden; }

    .bar { display: flex; align-items: center; align-self: flex-start; box-sizing: border-box; height: 35px; padding-right: 5px; background: linear-gradient(#f8f7f4, #dddad3); }
    .grip { width: 3px; height: 23px; margin: 0 5px 0 3px; flex: none; background: repeating-linear-gradient(#808080 0 3px, transparent 3px 5px); }
    .grip.again { margin-left: 8px; }
    .tool { display: grid; place-items: center; width: 31px; height: 30px; flex: none; }
    .tool.on { background: #bcc0cc; }
    .arrow { display: flex; align-items: center; width: 11px; height: 30px; flex: none; }
    .arrow::before { content: ""; border: 3px solid transparent; border-top-color: #000; border-bottom: 0; margin-left: 1px; }
    .sep { width: 1px; height: 17px; margin: 0 4px 0 3px; flex: none; background: #9c9a94; }

    .field { display: flex; box-sizing: border-box; background: #fff; border: 1px solid; border-color: #808080 #fff #fff #808080; box-shadow: inset 1px 1px #404040, inset -1px -1px #d4d0c8; padding: 2px; }
    .field input, .field select { flex: 1; min-width: 0; width: 100%; border: 0; outline: 0; padding: 0 2px; background: transparent; appearance: none; }
    .field .drop, .expand { display: grid; place-items: center; width: 19px; flex: none; }
    .drop::before, .expand::before { content: ""; border: 6px solid transparent; border-top-color: #000; border-bottom: 0; }
    .font { width: 131px; height: 23px; }
    .size { width: 52px; height: 23px; margin-left: 9px; margin-right: 2px; }

    .work { flex: 1; min-height: 0; display: flex; }
    .main { flex: 1; min-width: 0; display: flex; flex-direction: column; }
    .formula { display: flex; align-items: center; height: 31px; flex: none; box-sizing: border-box; padding: 0 6px 0 0; }
    .name { width: 139px; height: 23px; margin-right: 1px; }
    .formula .input { flex: 1; height: 21px; padding: 1px; }
    .formula .input input { padding: 0; }
    .expand { width: 20px; height: 20px; margin-left: 3px; }
    .view { flex: 1; min-height: 0; display: flex; border-top: 1px solid #808080; }
    calc-sheet { flex: 1; min-width: 0; margin-right: 1px; }
    .vscroll { width: 20px; margin-right: 1px; display: flex; flex-direction: column; background: #e8e7e2; }
    .splitter { height: 6px; background: linear-gradient(#000, #000) 5px 2px / 10px 1px no-repeat #808080; }
    .sb { display: grid; place-items: center; width: 20px; height: 19px; flex: none; }
    .sb svg { display: block; width: 12px; height: 12px; }
    .vthumb { height: 16px; margin-top: 84px; flex: none; }
    .vscroll .down { margin-top: auto; }
    .hscroll { display: flex; height: 20px; flex: none; padding: 0 22px 0 1px; }
    .hthumb { flex: 1; }
    .hscroll .sb { height: 20px; }
    .hsplit { width: 4px; background: linear-gradient(#000, #000) 2px 5px / 1px 10px no-repeat #808080; }
    .tabs { display: flex; height: 18px; flex: none; padding-left: 6px; }
    .nav { width: 18px; display: grid; place-items: center; }
    .nav svg { display: block; width: 14px; height: 14px; }
    .add { width: 30px; display: grid; place-items: center; }
    .add svg { display: block; width: 15px; height: 15px; }
    .tab { box-sizing: border-box; height: 18px; border: 1px solid #404040; border-left-width: 0; padding: 0 16px; line-height: 16px; }
    .tab.t0 { background: #ffedab; border-left-width: 1px; } .tab.t1 { background: #b8ffa8; padding: 0 18px; }
    .tab.t2 { background: linear-gradient(#fff 15px, #ffc8e8 15px); font-weight: bold; border-width: 0 1px 0 0; padding: 0 10px; }
    .tab.t3 { background: #c0c0c0; padding: 0 13px; }

    .side { position: relative; width: 46px; display: flex; flex-direction: column; align-items: center; gap: 11px; box-sizing: border-box; margin-bottom: 1px; padding: 8px 0 0 6px;
      border-top: 1px solid #808080; border-bottom: 1px solid #fff; box-shadow: inset 1px 0 #808080, inset 2px 0 #fff, inset 5px 0 #d4d0c8, inset 6px 0 #808080, inset 7px 0 #fff, inset 0 1px #fff, inset 0 -1px #808080; }
    .side hr { width: 24px; margin: -5px 0 -4px; border: 0; border-top: 1px solid #bcb8b0; }
    .handle { position: absolute; left: -1px; top: 307px; width: 7px; height: 73px; background: #404040; display: grid; place-items: center; }
    .handle::before { content: ""; border: 3px solid transparent; border-left-color: #fff; border-right: 0; }

    .find { height: 35px; }
    .find .field { width: 249px; height: 23px; }
    .find .field input::placeholder { color: #808080; opacity: 1; }
    .find .all { margin: 0 7px 0 5px; white-space: nowrap; }
    .find label { display: flex; align-items: center; gap: 3px; background: #d4d0c8; height: 20px; margin-right: 1px; white-space: nowrap; }
    .find input[type="checkbox"] { appearance: none; width: 13px; height: 13px; background: #fff; border: 1px solid; border-color: #808080 #fff #fff #808080; box-shadow: inset 1px 1px #404040, inset -1px -1px #d4d0c8; }
    .find .result { width: 251px; height: 25px; background: #d4d0c8; }

    .status { display: flex; align-items: stretch; height: 24px; box-sizing: border-box; border-top: 1px solid #808080; padding-top: 2px; line-height: 21px; }
    .cell { box-sizing: border-box; border-right: 1px solid #808080; box-shadow: 1px 0 #fff; margin: 0 0 1px; padding: 0 10px; white-space: nowrap; flex: none; }
    .cell.page { width: 239px; } .cell.blank { width: 218px; } .cell.style { width: 298px; padding: 0 9px; }
    .cell.ins { width: 68px; } .cell.small { width: 30px; display: grid; place-items: center; padding: 0; }
    .cell.sum { flex: 1; text-align: center; min-width: 0; }
    .cell.zoom { display: flex; align-items: center; gap: 6px; width: 143px; padding: 0 6px 0 9px; }
    .cell.zoom button { width: 9px; height: 9px; flex: none; background: linear-gradient(#808080, #808080) center / 9px 2px no-repeat; }
    .cell.zoom .inc { background: linear-gradient(#808080, #808080) center / 9px 2px no-repeat, linear-gradient(#808080, #808080) center / 2px 9px no-repeat; }
    .zoom input { appearance: none; flex: 1; min-width: 0; height: 12px; background: linear-gradient(#808080, #808080) center / 100% 2px no-repeat; }
    .zoom input::-webkit-slider-thumb { appearance: none; width: 8px; height: 10px; border-radius: 3px; background: #fff; border: 1px solid #808080; border-left-width: 2px; }
    .pct { padding-left: 4px; width: 39px; }
  `;

  private tools(spec: string) {
    return spec.split(" ").map((t) => {
      if (t === "|") return html`<span class="sep"></span>`;
      if (t === ":") return html`<span class="grip again"></span>`;
      if (t === "v") return html`<button class="arrow" aria-label="More"></button>`;
      const name = t.replace("!", "");
      return html`<button class=${classMap({ tool: true, on: t.endsWith("!") })} aria-label=${name}>${icon(name)}</button>`;
    });
  }

  private tri(d: string, color = "#000") {
    return html`<svg viewBox="0 0 12 12" aria-hidden="true"><path d=${d} fill=${color} /></svg>`;
  }

  render() {
    const menus: [string, string, string][] = [
      ["", "F", "ile"], ["", "E", "dit"], ["", "V", "iew"], ["", "I", "nsert"], ["F", "o", "rmat"], ["", "S", "heet"],
      ["", "D", "ata"], ["", "T", "ools"], ["LeenO", "", ""], ["", "W", "indow"], ["", "H", "elp"],
    ];
    const navs = ["M2 1v12M12 1v12L4 7z", "M11 1v12L3 7z", "M3 1v12l8-6z", "M12 1v12M2 1v12l8-6z"];
    return html`
      <header class="title">
        ${icon("app")}
        <h1>${this.fileName} - LibreOffice Calc</h1>
        <button class="winbtn raised" aria-label="Minimize"><svg viewBox="0 0 13 12"><path d="M2 9h7v2H2z" /></svg></button>
        <button class="winbtn raised" aria-label="Maximize"><svg viewBox="0 0 13 12"><path d="M1 0h11v11H1zM2 2h9v8H2z" fill-rule="evenodd" /></svg></button>
        <button class="winbtn raised" aria-label="Close"><svg viewBox="0 0 13 12"><path d="M2.500 2l8 8M10.500 2l-8 8" stroke="#000" stroke-width="2" /></svg></button>
      </header>
      <div class="menu">
        <nav>${menus.map(([a, u, b]) => html`<button>${a}<u>${u}</u>${b}</button>`)}</nav>
        <button class="update" aria-label="Update available">${icon("download")}</button>
      </div>
      <div class="bar"><span class="grip"></span>${this.tools(STANDARD)}</div>
      <div class="bar">
        <span class="grip"></span>
        <div class="field font"><select aria-label="Font name"><option>Liberation Serif</option></select><span class="drop raised"></span></div>
        <div class="field size"><select aria-label="Font size"><option>8</option></select><span class="drop raised"></span></div>
        ${this.tools(FORMATTING)}
      </div>
      <div class="bar"><span class="grip"></span>${this.tools(LEENO)}</div>
      <div class="work">
        <main class="main">
          <div class="formula">
            <div class="field name"><input aria-label="Name box" value="C117" /><button class="drop raised" aria-label="Names"></button></div>
            ${this.tools("| fx sigma equals |")}
            <div class="field input"><input aria-label="Formula" value='=CONCATENATE("";" - vedi voce n.";TEXT(A$109;"@");" - art. ";B$109;" [";VLOOKUP(B$109;elenco_prezzi;3;FALSE());"] - ";LEFT(C$109;$S1.$H$334))' /></div>
            <button class="expand raised" aria-label="Expand formula bar"></button>
          </div>
          <div class="view">
            <calc-sheet></calc-sheet>
            <div class="vscroll">
              <div class="splitter"></div>
              <button class="sb raised" aria-label="Scroll up">${this.tri("M0 9h11L5.500 3z")}</button>
              <div class="vthumb raised"></div>
              <button class="sb raised down" aria-label="Scroll down">${this.tri("M0 3h11L5.500 9z")}</button>
            </div>
          </div>
          <div class="hscroll">
            <button class="sb raised" aria-label="Scroll left">${this.tri("M9 0v12L3 6z", "#808080")}</button>
            <div class="hthumb raised"></div>
            <button class="sb raised" aria-label="Scroll right">${this.tri("M3 0v12l6-6z", "#808080")}</button>
            <div class="hsplit"></div>
          </div>
          <div class="tabs">
            ${navs.map((d) => html`<button class="nav" aria-label="Scroll tabs"><svg viewBox="0 0 14 14"><path d=${d} fill="#808080" stroke="#808080" /></svg></button>`)}
            <button class="add" aria-label="Add sheet"><svg viewBox="0 0 15 15"><path d="M7.500 1v13M1 7.500h13" stroke="#000" stroke-width="4" /></svg></button>
            ${["Elenco Prezzi", "Analisi di Prezzo", "COMPUTO", "S1"].map((t, i) => html`<button class="tab t${i}">${t}</button>`)}
          </div>
        </main>
        <aside class="side">
          ${icon("menu")}<hr />
          ${["wrench", "styles", "gallery", "compass", "fx"].map((n) => html`<button aria-label=${n}>${icon(n)}</button>`)}
          <button class="handle" aria-label="Hide sidebar"></button>
        </aside>
      </div>
      <div class="bar find">
        <span class="grip"></span>
        <button class="tool" aria-label="Close find bar">${icon("close")}</button>
        <div class="field"><input placeholder="Find" aria-label="Find" /><button class="drop raised" aria-label="Search history"></button></div>
        <button class="tool" aria-label="Find previous">${icon("prev")}</button>
        <button class="tool" aria-label="Find next">${icon("next")}</button>
        <button class="all">Find All</button>
        <label><input type="checkbox" /><span><u>F</u>ormatted Display</span></label>
        <label><input type="checkbox" /><span><u>M</u>atch Case</span></label>
        ${this.tools("| find |")}
        <div class="result"></div>
      </div>
      <footer class="status">
        <div class="cell page">Sheet 4 of 20</div>
        <div class="cell blank"></div>
        <div class="cell style">PageStyle_COMPUTO_A4</div>
        <div class="cell ins"></div>
        <div class="cell small"><svg width="14" height="12" viewBox="0 0 14 12"><path d="M1 3h8v6H1z" fill="#808080" /><path d="M10 1h3M10 11h3M11.500 1v10" stroke="#808080" /></svg></div>
        <div class="cell small"><svg width="14" height="12" viewBox="0 0 14 12"><path d="M8.500 1.500h-7v9h7" fill="none" stroke="#808080" /><path d="M9.500 3.500v5M7.500 5l4 2.500M11.500 5l-4 2.500" stroke="#b01818" /></svg></div>
        <div class="cell small"></div>
        <div class="cell sum">Average: ; Sum: 0</div>
        <div class="cell zoom"><button aria-label="Zoom out"></button><input type="range" min="0" max="100" value="52" aria-label="Zoom" /><button class="inc" aria-label="Zoom in"></button></div>
        <div class="pct">120%</div>
      </footer>
    `;
  }
}
